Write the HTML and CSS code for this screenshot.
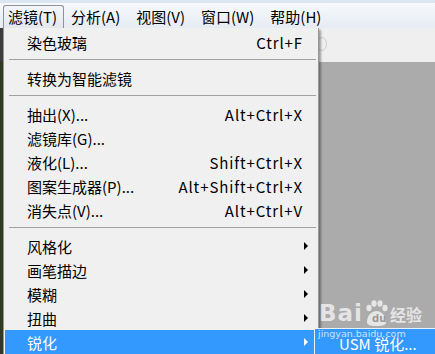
FILE: index.html
```html
<!DOCTYPE html>
<html lang="zh-CN">
<head>
    <meta charset="UTF-8">
    <title>滤镜菜单</title>
    <link rel="stylesheet" href="styles.css">
</head>
<body>
    <div id="menubar">
        <span class="menu-title active">滤镜(T)</span>
        <span class="menu-title">分析(A)</span>
        <span class="menu-title">视图(V)</span>
        <span class="menu-title">窗口(W)</span>
        <span class="menu-title">帮助(H)</span>
    </div>
    <div id="workspace">
        <div id="options-bar"><span class="faint-icon"></span></div>
        <div id="canvas"></div>
    </div>

    <div id="filter-menu">
        <div class="item"><span>染色玻璃</span><span class="key">Ctrl+F</span></div>
        <div class="sep"></div>
        <div class="item"><span>转换为智能滤镜</span></div>
        <div class="sep"></div>
        <div class="item"><span>抽出(X)...</span><span class="key">Alt+Ctrl+X</span></div>
        <div class="item"><span>滤镜库(G)...</span></div>
        <div class="item"><span>液化(L)...</span><span class="key">Shift+Ctrl+X</span></div>
        <div class="item"><span>图案生成器(P)...</span><span class="key">Alt+Shift+Ctrl+X</span></div>
        <div class="item"><span>消失点(V)...</span><span class="key">Alt+Ctrl+V</span></div>
        <div class="sep"></div>
        <div class="item"><span>风格化</span><span class="arrow"></span></div>
        <div class="item"><span>画笔描边</span><span class="arrow"></span></div>
        <div class="item"><span>模糊</span><span class="arrow"></span></div>
        <div class="item"><span>扭曲</span><span class="arrow"></span></div>
        <div class="item selected"><span>锐化</span><span class="arrow"></span></div>
    </div>

    <div id="watermark">
        <span class="wm-bai">Bai</span>
        <svg class="wm-paw" width="24" height="26" viewBox="0 0 24 26">
            <ellipse cx="5" cy="8" rx="2.6" ry="3.2" fill="currentColor"/>
            <ellipse cx="10" cy="3.5" rx="2.6" ry="3.2" fill="currentColor"/>
            <ellipse cx="16" cy="3.5" rx="2.6" ry="3.2" fill="currentColor"/>
            <ellipse cx="21" cy="8" rx="2.6" ry="3.2" fill="currentColor"/>
            <path d="M3 22 C3 15 8 11 12.5 11 C17 11 22 15 22 22 C22 25 19 26 12.5 26 C6 26 3 25 3 22 Z" fill="currentColor"/>
        </svg>
        <span class="wm-du">du</span>
        <span class="wm-jy">经验</span>
    </div>

    <div id="submenu">
        <span class="wm-url">jingyan.baidu.com</span>
        <span class="sub-item">USM 锐化...</span>
    </div>
</body>
</html>
```

FILE: styles.css
```css
body {
    margin: 0;
    width: 435px;
    height: 354px;
    overflow: hidden;
    position: relative;
    font-family: "Noto Sans CJK SC", "Noto Sans", sans-serif;
    font-size: 15px;
    color: #000;
    background-color: #ababab;
}

#menubar {
    height: 28px;
    display: flex;
    align-items: flex-end;
    padding-left: 3px;
    box-sizing: border-box;
    border-top: 3px solid #dbe6f2;
    background: linear-gradient(#f7f9fc, #e6ecf3);
}

.menu-title {
    height: 23px;
    line-height: 22px;
    padding: 0 8px 0 5px;
    margin-right: 1px;
    box-sizing: border-box;
    border: 1px solid transparent;
    white-space: nowrap;
}

.menu-title.active {
    border-color: #8d939a;
    border-bottom: none;
    border-radius: 3px 3px 0 0;
    background: linear-gradient(#f4f6f9, #e4e8ee);
    width: 61px;
    padding-left: 4px;
}

#workspace {
    display: flex;
    flex-direction: column;
    height: 326px;
}

#options-bar {
    height: 34px;
    background-color: #efefef;
    border-left: 3px solid #3c3c3c;
    position: relative;
}

.faint-icon {
    position: absolute;
    left: 313px;
    top: 9px;
    width: 9px;
    height: 12px;
    border: 1px solid #d0d0d0;
    border-radius: 50%;
}

#canvas {
    flex: 1;
    background-color: #ababab;
    border-left: 3px solid #2f3a24;
}

/* dropdown menu */
#filter-menu {
    position: absolute;
    left: 3px;
    top: 28px;
    width: 316px;
    height: 340px;
    box-sizing: border-box;
    padding: 2px 0 0 1px;
    background-color: #f0f0f0;
    border: 1px solid #979797;
    border-top: none;
    box-shadow: 2px 2px 2px rgba(0, 0, 0, 0.35);
}

.item {
    height: 24px;
    display: flex;
    align-items: center;
    justify-content: space-between;
    padding: 0 16px 0 22px;
    white-space: nowrap;
}

.key {
    letter-spacing: 0.9px;
    margin-right: -1px;
}

.arrow {
    width: 0;
    height: 0;
    margin-right: -6px;
    border-top: 4px solid transparent;
    border-bottom: 4px solid transparent;
    border-left: 4px solid #000;
}

.item.selected {
    background-color: #3399ff;
    color: #fff;
}

.item.selected .arrow {
    border-left-color: #fff;
}

.sep {
    height: 1px;
    margin: 5px 2px 6px 4px;
    background-color: #a0a0a0;
}

/* submenu */
#submenu {
    position: absolute;
    left: 314px;
    top: 328px;
    width: 130px;
    height: 30px;
    box-sizing: border-box;
    border: 1px solid #e8f1fb;
    background-color: #3399ff;
    color: #fff;
}

.sub-item {
    position: absolute;
    left: 24px;
    top: 3px;
    line-height: 24px;
    font-size: 15px;
}

.wm-url {
    position: absolute;
    left: 3px;
    top: -1px;
    font-family: "DejaVu Sans", sans-serif;
    font-size: 9.5px;
    line-height: 11px;
    color: rgba(255, 255, 255, 0.75);
}

/* watermark */
#watermark {
    position: absolute;
    left: 319px;
    top: 300px;
    display: flex;
    align-items: flex-end;
    color: rgba(255, 255, 255, 0.7);
    z-index: 1;
}

.wm-bai {
    font-family: "DejaVu Sans", sans-serif;
    font-weight: bold;
    font-size: 23px;
    line-height: 26px;
    letter-spacing: 1px;
}

.wm-paw {
    margin-left: 1px;
    color: rgba(255, 255, 255, 0.7);
}

.wm-du {
    position: absolute;
    left: 53px;
    top: 13px;
    font-family: "DejaVu Sans", sans-serif;
    font-weight: bold;
    font-size: 10px;
    color: #9a9a9a;
}

.wm-jy {
    margin-left: 2px;
    font-size: 16px;
    line-height: 24px;
    font-weight: bold;
}
```
